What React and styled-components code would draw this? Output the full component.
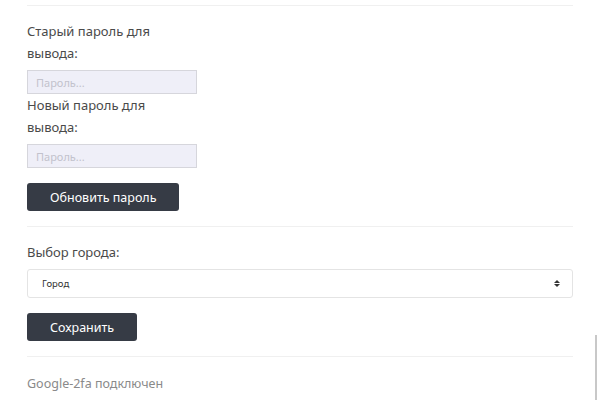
import styled, { createGlobalStyle } from "styled-components"

const Global = createGlobalStyle`
  body {
    margin: 0;
    background: #fff;
    font-family: "Noto Sans", "Open Sans", sans-serif;
    color: #4a4a4a;
  }
`

const Page = styled.div`
  position: relative;
  width: 600px;
  height: 400px;
  overflow: hidden;
  padding: 5px 27px 0 27px;
  box-sizing: border-box;
`

const Divider = styled.hr`
  border: 0;
  border-top: 1px solid #f0f0f0;
  margin: 0;
`

const Section = styled.div`
  display: flex;
  flex-direction: column;
  align-items: flex-start;
  padding: ${(p) => p.$pad || "14px 0 15px"};
`

const Label = styled.label`
  font-size: 13px;
  line-height: 22px;
  width: ${(p) => p.$narrow ? "150px" : "auto"};
  color: #4a4a4a;
  margin-bottom: ${(p) => p.$mb || "6px"};
`

const Input = styled.input`
  width: 170px;
  height: 24px;
  box-sizing: border-box;
  border: 1px solid #d6d6dc;
  background: #efeff8;
  padding: 0 8px;
  font-family: inherit;
  font-size: 11px;
  outline: none;
  &::placeholder {
    color: #c2c2cc;
  }
`

const Button = styled.button`
  height: 28px;
  padding: 0 ${(p) => p.$px || "22px"};
  border: 0;
  border-radius: 3px;
  background: #363b45;
  color: #fff;
  font-family: inherit;
  font-size: 12.5px;
  cursor: pointer;
  margin-top: ${(p) => p.$mt || "0"};
`

const SelectBox = styled.div`
  display: flex;
  align-items: center;
  justify-content: space-between;
  width: 100%;
  height: 29px;
  box-sizing: border-box;
  border: 1px solid #e4e4e4;
  border-radius: 3px;
  padding: 0 12px 0 14px;
  font-size: 9.5px;
  color: #333;
  margin-bottom: 15px;
`

const Arrows = styled.span`
  display: flex;
  flex-direction: column;
  gap: 1px;
  &::before, &::after {
    content: "";
    border-left: 3px solid transparent;
    border-right: 3px solid transparent;
  }
  &::before { border-bottom: 3.5px solid #333; }
  &::after { border-top: 3.5px solid #333; }
`

const Status = styled.div`
  font-size: 12.5px;
  line-height: 17px;
  color: #8a8a8a;
  padding-top: 18px;
`

const Scrollbar = styled.div`
  position: absolute;
  right: 3px;
  top: 335px;
  width: 2px;
  height: 70px;
  background: #c8c8c8;
`

export default function App() {
  return (
    <>
      <Global />
      <Page>
        <Divider />
        <Section $pad="14px 0 15px">
          <Label $narrow $mb="6px">Старый пароль для вывода:</Label>
          <Input placeholder="Пароль..." />
          <Label $narrow $mb="6px">Новый пароль для вывода:</Label>
          <Input placeholder="Пароль..." />
          <Button $mt="15px" $px="23px">Обновить пароль</Button>
        </Section>
        <Divider />
        <Section $pad="14px 0 15px">
          <Label $mb="6px">Выбор города:</Label>
          <SelectBox>
            Город
            <Arrows />
          </SelectBox>
          <Button $px="23px">Сохранить</Button>
        </Section>
        <Divider />
        <Status>Google-2fa подключен</Status>
        <Scrollbar />
      </Page>
    </>
  )
}
